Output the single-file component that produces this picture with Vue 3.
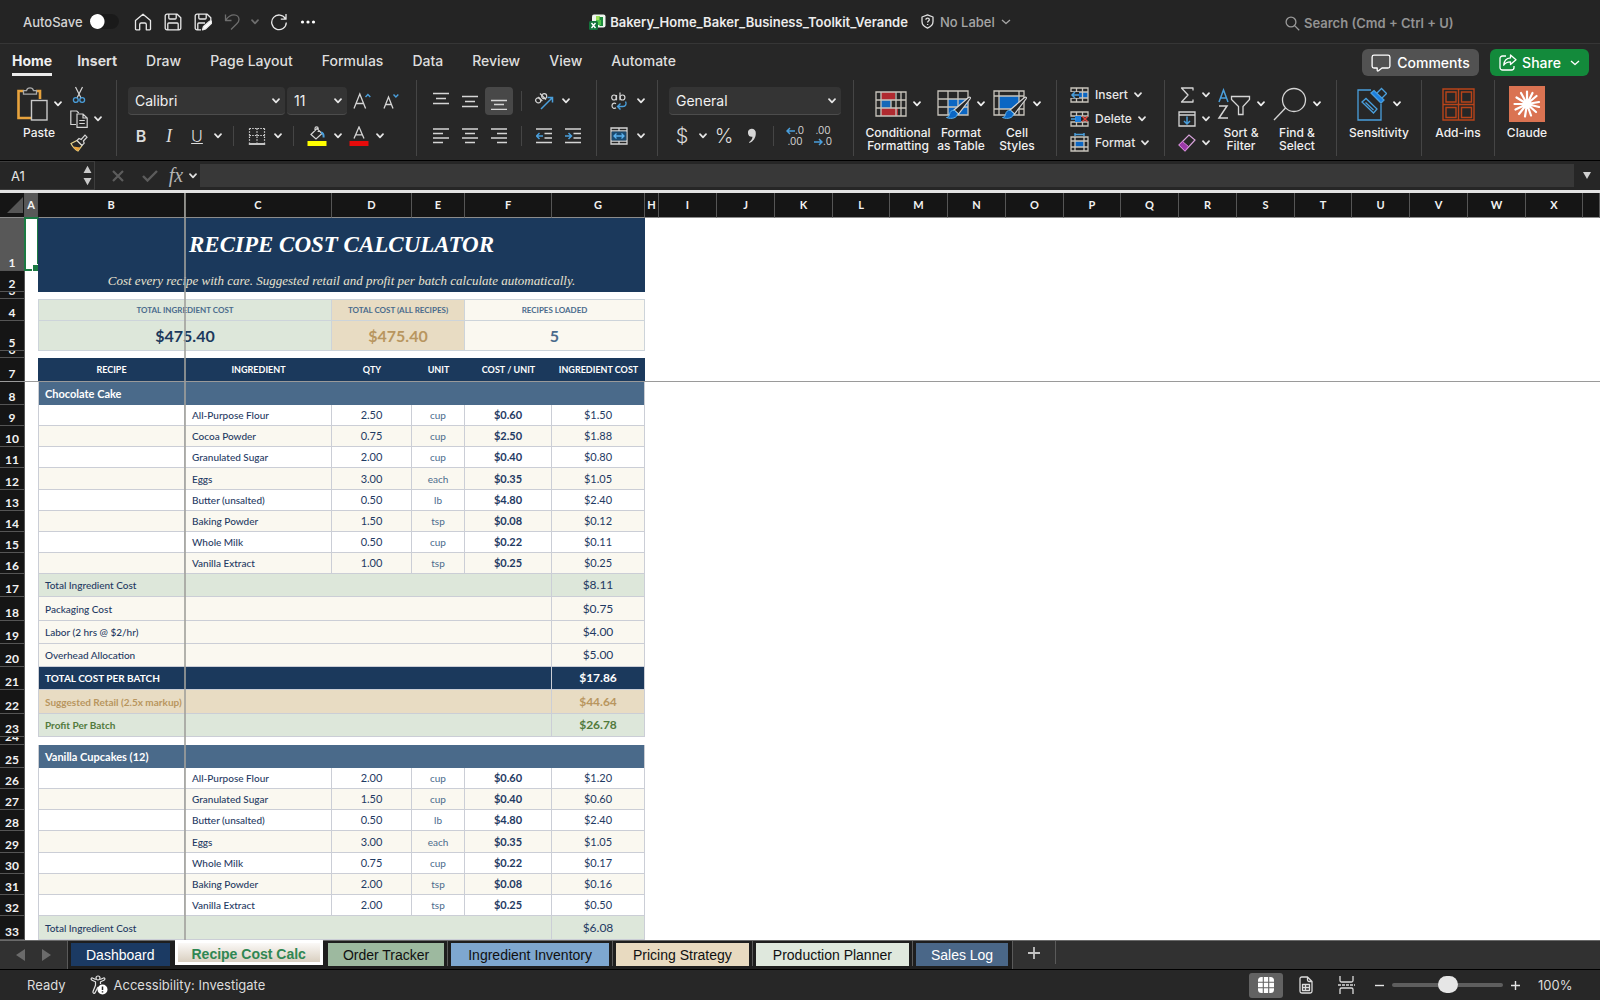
<script setup>
import { h, ref } from 'vue'

const Chevron = () =>
  h('svg', { class: 'chev', width: 8, height: 6, viewBox: '0 0 8 6', 'aria-hidden': 'true' }, [
    h('path', { d: 'M1 1.2 4 4.4 7 1.2', fill: 'none', stroke: 'currentColor', 'stroke-width': 1.7, 'stroke-linecap': 'round', 'stroke-linejoin': 'round' }),
  ])

const menus = ['Home', 'Insert', 'Draw', 'Page Layout', 'Formulas', 'Data', 'Review', 'View', 'Automate']
const fontName = ref('Calibri')
const fontSize = ref('11')
const numberFormat = ref('General')
const zoom = ref(50)

const columns = [
  { id: 'A', w: 13 }, { id: 'B', w: 147 }, { id: 'C', w: 147 }, { id: 'D', w: 80 },
  { id: 'E', w: 53 }, { id: 'F', w: 87 }, { id: 'G', w: 93 }, { id: 'H', w: 14 },
  ...'IJKLMNOPQRSTUVWX'.split('').map((id, i) => ({ id, w: i % 4 === 3 ? 57 : 58 })),
]

const item = (n, name, qty, unit, price, cost, hgt = 21) => ({ n, h: hgt, kind: 'item', name, qty, unit, price, cost })
const sum = (n, hgt, tone, label, value) => ({ n, h: hgt, kind: 'sum', tone, label, value })

const rows = [
  { n: 1, h: 53, kind: 'title', text: 'RECIPE COST CALCULATOR' },
  { n: 2, h: 21, kind: 'subtitle', text: 'Cost every recipe with care. Suggested retail and profit per batch calculate automatically.' },
  { n: 3, h: 7, kind: 'gap' },
  { n: 4, h: 22, kind: 'kpi-label', cells: ['TOTAL INGREDIENT COST', 'TOTAL COST (ALL RECIPES)', 'RECIPES LOADED'] },
  { n: 5, h: 30, kind: 'kpi-value', cells: ['$475.40', '$475.40', '5'] },
  { n: 6, h: 7, kind: 'gap' },
  { n: 7, h: 24, kind: 'head', cells: ['RECIPE', 'INGREDIENT', 'QTY', 'UNIT', 'COST / UNIT', 'INGREDIENT COST'] },
  { n: 8, h: 23, kind: 'recipe', text: 'Chocolate Cake' },
  item(9, 'All-Purpose Flour', '2.50', 'cup', '$0.60', '$1.50'),
  item(10, 'Cocoa Powder', '0.75', 'cup', '$2.50', '$1.88'),
  item(11, 'Granulated Sugar', '2.00', 'cup', '$0.40', '$0.80'),
  item(12, 'Eggs', '3.00', 'each', '$0.35', '$1.05', 22),
  item(13, 'Butter (unsalted)', '0.50', 'lb', '$4.80', '$2.40'),
  item(14, 'Baking Powder', '1.50', 'tsp', '$0.08', '$0.12'),
  item(15, 'Whole Milk', '0.50', 'cup', '$0.22', '$0.11'),
  item(16, 'Vanilla Extract', '1.00', 'tsp', '$0.25', '$0.25'),
  sum(17, 23, 'sage', 'Total Ingredient Cost', '$8.11'),
  sum(18, 24, 'cream', 'Packaging Cost', '$0.75'),
  sum(19, 23, 'cream', 'Labor (2 hrs @ $2/hr)', '$4.00'),
  sum(20, 23, 'cream', 'Overhead Allocation', '$5.00'),
  sum(21, 23, 'navy', 'TOTAL COST PER BATCH', '$17.86'),
  sum(22, 24, 'tan', 'Suggested Retail (2.5x markup)', '$44.64'),
  sum(23, 23, 'profit', 'Profit Per Batch', '$26.78'),
  { n: 24, h: 8, kind: 'gap' },
  { n: 25, h: 23, kind: 'recipe', text: 'Vanilla Cupcakes (12)' },
  item(26, 'All-Purpose Flour', '2.00', 'cup', '$0.60', '$1.20'),
  item(27, 'Granulated Sugar', '1.50', 'cup', '$0.40', '$0.60'),
  item(28, 'Butter (unsalted)', '0.50', 'lb', '$4.80', '$2.40'),
  item(29, 'Eggs', '3.00', 'each', '$0.35', '$1.05', 22),
  item(30, 'Whole Milk', '0.75', 'cup', '$0.22', '$0.17'),
  item(31, 'Baking Powder', '2.00', 'tsp', '$0.08', '$0.16'),
  item(32, 'Vanilla Extract', '2.00', 'tsp', '$0.25', '$0.50'),
  sum(33, 24, 'sage', 'Total Ingredient Cost', '$6.08'),
]

const striped = (row) => (row.n < 17 ? row.n % 2 === 0 : row.n % 2 === 1)

const sheets = [
  { name: 'Dashboard', tone: 's-navy' },
  { name: 'Recipe Cost Calc', tone: 's-active' },
  { name: 'Order Tracker', tone: 's-green' },
  { name: 'Ingredient Inventory', tone: 's-blue' },
  { name: 'Pricing Strategy', tone: 's-tan' },
  { name: 'Production Planner', tone: 's-mint' },
  { name: 'Sales Log', tone: 's-steel' },
]
</script>

<template>
  <div class="app">
    <header class="titlebar">
      <div class="quick">
        <label class="autosave">AutoSave<input type="checkbox" role="switch" /></label>
        <button aria-label="Home">
          <svg width="18" height="18" viewBox="0 0 18 18" class="line"><path d="M1.5 7.6 9 1.2l7.500 6.400V16a.8.8 0 0 1-.8.8h-3.400V11.500a1.500 1.500 0 0 0-1.500-1.500H7.200a1.500 1.500 0 0 0-1.500 1.500v5.300H2.300a.8.8 0 0 1-.8-.8z" /></svg>
        </button>
        <button aria-label="Save">
          <svg width="18" height="18" viewBox="0 0 18 18" class="line"><path d="M1.200 3A1.800 1.800 0 0 1 3 1.200h10.200l3.600 3.600V15a1.800 1.800 0 0 1-1.800 1.800H3A1.800 1.800 0 0 1 1.200 15zM4.800 1.400V5a1 1 0 0 0 1 1h5.400a1 1 0 0 0 1-1V1.400M3.800 16.600V11a1 1 0 0 1 1-1h8.400a1 1 0 0 1 1 1v5.600" /></svg>
        </button>
        <button aria-label="Save as">
          <svg width="18" height="18" viewBox="0 0 18 18" class="line"><path d="M7 16.800H3A1.800 1.800 0 0 1 1.200 15V3A1.800 1.800 0 0 1 3 1.200h10.200l3.600 3.600V8M4.800 1.400V5a1 1 0 0 0 1 1h5.400a1 1 0 0 0 1-1V1.400M3.800 16.600V11a1 1 0 0 1 1-1H11" /><path d="m8.500 16.800 1-3.300 6-5.200a1.400 1.400 0 0 1 2 2l-5.800 5.600z" fill="#fff" /></svg>
        </button>
        <button aria-label="Undo" class="dim">
          <svg width="16" height="18" viewBox="0 0 16 18" class="line"><path d="M1.500 1.500v6h6M1.800 7.200C4 3.600 7 1.800 10 1.800c3 0 5 2 5 4.600 0 1.800-.8 3-2.200 4.400L7 16.500" /></svg>
        </button>
        <button aria-label="Undo options" class="dim tight"><Chevron /></button>
        <button aria-label="Redo">
          <svg width="18" height="18" viewBox="0 0 18 18" class="line"><path d="M15.500 6A7.300 7.300 0 1 0 16.300 9.500M16 1v5.200h-5.200" /></svg>
        </button>
        <button aria-label="More">
          <svg width="16" height="4" viewBox="0 0 16 4" fill="#fff"><circle cx="2.500" cy="2" r="1.600" /><circle cx="8" cy="2" r="1.600" /><circle cx="13.500" cy="2" r="1.600" /></svg>
        </button>
      </div>
      <div class="doc">
        <svg width="17" height="16" viewBox="0 0 17 16"><rect x="3" y=".5" width="13.500" height="13" rx="2" fill="#eef6ee" /><rect x="7" y="2" width="4" height="4" fill="#9be05a" /><rect x="10.500" y="3" width="3.500" height="9" fill="#1d8a3d" /><rect x="7" y="6" width="5" height="5" fill="#4dc247" /><rect x="0" y="7" width="9" height="9" rx="1.500" fill="#13733b" /><path d="m2.500 9 4 5M6.500 9l-4 5" stroke="#fff" stroke-width="1.400" /></svg>
        <h1>Bakery_Home_Baker_Business_Toolkit_Verande</h1>
        <button class="label-btn">
          <svg width="13" height="15" viewBox="0 0 13 15" class="line"><path d="M6.500.900 12 3v4.600c0 3.200-2.200 5.300-5.500 6.500C3.200 12.900 1 10.800 1 7.600V3zM4.900 5.700c0-2.200 3.400-2.200 3.400 0 0 1.300-1.700 1.300-1.700 2.800M6.600 10v1" /></svg>
          <span>No Label</span>
          <svg width="10" height="6" viewBox="0 0 10 6" class="line"><path d="m1 1 4 3.600L9 1" stroke="#a6a6a6" /></svg>
        </button>
      </div>
      <div class="search">
        <svg width="15" height="15" viewBox="0 0 15 15" fill="none" stroke="#9b9b9b" stroke-width="1.300"><circle cx="6" cy="6" r="4.900" /><path d="m9.600 9.600 4.600 4.600" /></svg>
        <input type="text" placeholder="Search (Cmd + Ctrl + U)" aria-label="Search" />
      </div>
    </header>

    <div class="menubar">
      <nav class="menus">
        <a v-for="(m, i) in menus" :key="m" href="#" :class="{ on: i === 0, strong: i < 2 }">{{ m }}</a>
      </nav>
      <button class="comments">
        <svg width="20" height="18" viewBox="0 0 20 18" class="line"><path d="M3 1.200h14A1.900 1.900 0 0 1 18.900 3v9.200A1.900 1.900 0 0 1 17 14h-6l-3.500 2.800c-.8.500-1.300.2-1.300-.6V14H3a1.900 1.900 0 0 1-1.900-1.800V3A1.900 1.900 0 0 1 3 1.200z" /></svg>
        Comments
      </button>
      <button class="share">
        <svg width="18" height="17" viewBox="0 0 18 17" class="line"><path d="M7 2H3.500A2.500 2.500 0 0 0 1 4.500v9A2.500 2.500 0 0 0 3.500 16h9a2.500 2.500 0 0 0 2.500-2.500V12M11.500 1l5.500 4.800-5.500 4.800V7.800c-3.200 0-5.300 1-6.800 3.400.3-4.200 2.800-7 6.800-7.300z" /></svg>
        Share
        <svg width="10" height="6" viewBox="0 0 10 6" class="line"><path d="m1 1 4 3.600L9 1" /></svg>
      </button>
    </div>

    <div class="ribbon">
      <section class="group g-clip">
        <button class="big">
          <span class="pic">
            <svg width="32" height="36" viewBox="0 0 32 36" fill="none"><path d="M8 5H2.500v27H15M20 5h4v8" stroke="#e8a33d" stroke-width="2.600" /><path d="M7.500 8.200V4.700h3a3.600 3.600 0 0 1 7 0h3v3.500z" stroke="#a9a9a9" stroke-width="1.300" fill="#272727" /><rect x="15.500" y="14.500" width="15.500" height="19.500" stroke="#c9c9c9" stroke-width="1.400" fill="#272727" /></svg>
            <Chevron />
          </span>
          Paste
        </button>
        <div class="stack">
          <button aria-label="Cut"><svg width="18" height="18" viewBox="0 0 18 18" fill="none"><path d="M5.500 1 11 12M12.500 1 7 12" stroke="#d5d5d5" stroke-width="1.200" /><circle cx="5.800" cy="14" r="2.400" stroke="#4a9fdc" stroke-width="1.300" /><circle cx="12.200" cy="14" r="2.400" stroke="#4a9fdc" stroke-width="1.300" /></svg></button>
          <button aria-label="Copy"><svg width="18" height="18" viewBox="0 0 18 18" fill="none" stroke="#d5d5d5" stroke-width="1.200"><path d="M6 14.500H.8V1h6l2 2" /><path d="M7 4h6l4.200 4v9.300H7zM13 4v4h4M9.300 10.500h5.500M9.300 13.500h5.500" /></svg><Chevron /></button>
          <button aria-label="Format painter"><svg width="18" height="18" viewBox="0 0 18 18" fill="none"><path d="M1 9.500 7 6.500l5 5-4 5.500c-2-1-5-3.500-7-7.500z" stroke="#e8d38a" stroke-width="1.200" /><path d="m3 12.500 7.500 1L8 17c-2-.8-3.800-2.500-5-4.500z" fill="#e8a33d" /><path d="m7 6.500 2-2 2.200 1L15 1.200l2 2L13.400 7l.8 2.200-2.200 2.300z" stroke="#d5d5d5" stroke-width="1.200" fill="#272727" /></svg></button>
        </div>
      </section>

      <section class="group g-font">
        <div class="line-row spaced">
          <span class="pick font-pick"><select v-model="fontName" aria-label="Font"><option>Calibri</option></select><Chevron /></span>
          <span class="pick size-pick"><select v-model="fontSize" aria-label="Font size"><option>11</option></select><Chevron /></span>
          <button class="ib" aria-label="Increase font size"><svg width="18" height="18" viewBox="0 0 18 18" fill="none"><path d="M1 16.500 6.800 2 12.600 16.500M3 11.500h7.600" stroke="#d5d5d5" stroke-width="1.300" /><path d="m12.500 5 2.400-2.500L17.300 5" stroke="#4a9fdc" stroke-width="1.400" /></svg></button>
          <button class="ib" aria-label="Decrease font size"><svg width="18" height="18" viewBox="0 0 18 18" fill="none"><path d="M2 16.500 6.500 5 11 16.500M3.600 12.500h5.800" stroke="#d5d5d5" stroke-width="1.300" /><path d="m11.500 2.500 2.400 2.500 2.400-2.500" stroke="#4a9fdc" stroke-width="1.400" /></svg></button>
        </div>
        <div class="line-row flush">
          <button class="ib glyph"><b>B</b></button>
          <button class="ib glyph serif"><i>I</i></button>
          <button class="ib glyph thin"><u>U</u></button>
          <button class="cb" aria-label="Underline options"><Chevron /></button>
          <span class="sep"></span>
          <button class="ib" aria-label="Borders"><svg width="18" height="18" viewBox="0 0 18 18" stroke="#d5d5d5" fill="none"><path d="M1.500 1.500h15M1.500 1.500v14M16.500 1.500v14M9 1.500v14M1.500 8.500h15" stroke-dasharray="1.500 1.200" stroke-width="1.200" /><path d="M.8 17h16.400" stroke-width="1.800" /></svg></button>
          <button class="cb" aria-label="Border options"><Chevron /></button>
          <span class="sep"></span>
          <button class="ib" aria-label="Fill color"><svg width="20" height="20" viewBox="0 0 20 20" fill="none"><path d="m4 8.500 6-6 5 5-6 5.500z M8 5V2.500a1.600 1.600 0 0 1 3.200 0V6" stroke="#d5d5d5" stroke-width="1.200" /><path d="M14 6.500c2 .3 2.800 2 2.600 5" stroke="#4a9fdc" stroke-width="2" /><path d="M.5 15h19v5H.5z" fill="#ff0" /></svg></button>
          <button class="cb" aria-label="Fill color options"><Chevron /></button>
          <button class="ib" aria-label="Font color"><svg width="20" height="20" viewBox="0 0 20 20" fill="none"><path d="m5 12.500 5-11.500 5 11.500M6.800 8.800h6.400" stroke="#d5d5d5" stroke-width="1.300" /><path d="M.5 15h19v5H.5z" fill="#e60b0b" /></svg></button>
          <button class="cb" aria-label="Font color options"><Chevron /></button>
        </div>
      </section>

      <section class="group g-align">
        <div class="line-row">
          <button class="ib" aria-label="Top align"><svg width="16" height="18" viewBox="0 0 16 18" class="bars"><path d="M0 1.500h16M3 6.500h10M0 11.500h16" /></svg></button>
          <button class="ib" aria-label="Middle align"><svg width="16" height="18" viewBox="0 0 16 18" class="bars"><path d="M0 4.500h16M3 9.500h10M0 14.500h16" /></svg></button>
          <button class="ib on" aria-label="Bottom align"><svg width="16" height="18" viewBox="0 0 16 18" class="bars"><path d="M0 8.500h16M3 12.500h10M0 17.500h16" /></svg></button>
          <span class="sep"></span>
          <button class="ib" aria-label="Orientation"><svg width="20" height="18" viewBox="0 0 20 18" fill="none"><g stroke="#d5d5d5" stroke-width="1.200"><ellipse cx="4.200" cy="8.500" rx="2.300" ry="2.600" transform="rotate(-45 4.200 8.500)" /><path d="m4.300 5 4 4" /><path d="m6 1.500 6 6" /><circle cx="10.200" cy="4.200" r="2.500" /></g><path d="M7 17 18 6M13.500 5.500h5v5" stroke="#4a9fdc" stroke-width="1.500" /></svg></button>
          <button class="cb" aria-label="Orientation options"><Chevron /></button>
        </div>
        <div class="line-row">
          <button class="ib" aria-label="Align left"><svg width="16" height="16" viewBox="0 0 16 16" class="bars"><path d="M0 1h16M0 5.500h10M0 10h16M0 14.500h10" /></svg></button>
          <button class="ib" aria-label="Center"><svg width="16" height="16" viewBox="0 0 16 16" class="bars"><path d="M0 1h16M3 5.500h10M0 10h16M3 14.500h10" /></svg></button>
          <button class="ib" aria-label="Align right"><svg width="16" height="16" viewBox="0 0 16 16" class="bars"><path d="M0 1h16M6 5.500h10M0 10h16M6 14.500h10" /></svg></button>
          <span class="sep"></span>
          <button class="ib" aria-label="Decrease indent"><svg width="16" height="16" viewBox="0 0 16 16" class="bars"><path d="M0 1h16M8.500 5.500H16M8.500 10H16M0 14.500h16" /><path d="M7 8H.5M3.500 5l-3 3 3 3" class="blue" /></svg></button>
          <button class="ib" aria-label="Increase indent"><svg width="16" height="16" viewBox="0 0 16 16" class="bars"><path d="M0 1h16M8.500 5.500H16M8.500 10H16M0 14.500h16" /><path d="M0 8h6M3.500 5l3 3-3 3" class="blue" /></svg></button>
        </div>
      </section>

      <section class="group g-wrap">
        <div class="line-row">
          <button class="ib" aria-label="Wrap text"><svg width="18" height="18" viewBox="0 0 18 18" fill="none"><g stroke="#d5d5d5" stroke-width="1.200"><ellipse cx="4" cy="5.500" rx="2.300" ry="2.500" /><path d="M6.500 3v5.300" /><path d="M10 .5v7.800" /><ellipse cx="12.500" cy="5.500" rx="2.400" ry="2.500" /><path d="M6 11.800c-1.500-1.200-4-.5-4 2s2.500 3.200 4 2" /></g><path d="M15.500 9.500c1.500 2.500 0 5-2.500 5H8M10.500 11.500l-3 3 3 3" stroke="#4a9fdc" stroke-width="1.400" /></svg></button>
          <button class="cb" aria-label="Wrap options"><Chevron /></button>
        </div>
        <div class="line-row">
          <button class="ib" aria-label="Merge cells"><svg width="18" height="18" viewBox="0 0 18 18" fill="none"><path d="M1 1h16v16H1zM1 4h16M1 14h16M9 1v3M9 14v3" stroke="#d5d5d5" stroke-width="1.300" /><path d="M1.700 4.500h14.600v9H1.700z" fill="#1a4a70" /><path d="M4 9h10M6.500 6.500 4 9l2.500 2.500M11.500 6.500 14 9l-2.500 2.500" stroke="#5cb2ee" stroke-width="1.300" /></svg></button>
          <button class="cb" aria-label="Merge options"><Chevron /></button>
        </div>
      </section>

      <section class="group g-num">
        <div class="line-row">
          <span class="pick num-pick"><select v-model="numberFormat" aria-label="Number format"><option>General</option></select><Chevron /></span>
        </div>
        <div class="line-row flush">
          <button class="ib glyph money">$</button>
          <button class="cb" aria-label="Currency options"><Chevron /></button>
          <button class="ib glyph money">%</button>
          <button class="ib" aria-label="Comma style"><svg width="10" height="16" viewBox="0 0 10 16"><path d="M4.500.800a4 4 0 0 1 4.300 4.400c0 4.500-2.300 8-6.300 9.800l-.5-.8c2.200-1.400 3.300-3 3.500-5.400A4 4 0 1 1 4.500.800z" fill="#d5d5d5" /></svg></button>
          <span class="sep"></span>
          <button class="ib deci"><span><svg width="9" height="8" viewBox="0 0 9 8" class="blue"><path d="M9 4H1M4 1 1 4l3 3" /></svg>.0</span><span>.00</span></button>
          <button class="ib deci"><span>.00</span><span><svg width="9" height="8" viewBox="0 0 9 8" class="blue"><path d="M0 4h8M5 1l3 3-3 3" /></svg>.0</span></button>
        </div>
      </section>

      <section class="group g-style">
        <button class="big wide">
          <span class="pic">
            <svg width="32" height="26" viewBox="0 0 32 26"><path d="M6 1h14v8H6zM6 17h17v8H6z" fill="#b02a30" /><path d="M6 9h10v8H6z" fill="#1668b8" /><path d="M1 1h30v24H1zM1 9h30M1 17h30M6 1v24M26 1v24M21 1v24M16 9v8" class="grid" /></svg>
            <Chevron />
          </span>
          Conditional<br />Formatting
        </button>
        <button class="big">
          <span class="pic">
            <svg width="34" height="32" viewBox="0 0 34 32"><path d="M11 11h20v16H11z" fill="#0b66c3" /><path d="M1 3h30v24H1zM1 11h30M1 19h30M11 3v24M21 3v24" class="grid" /><path d="M17 22 31.500 9.500c1.500-1 2.500 0 1.500 1.500L21.500 26z" fill="#272727" stroke="#d5d5d5" stroke-width="1.200" /><path d="M17.500 22.500c-3-.5-4.500 1-5 4-.3 1.500-1 2.500-3 3 5 2 11 .5 11-4z" fill="#0b66c3" stroke="#5cb2ee" /></svg>
            <Chevron />
          </span>
          Format<br />as Table
        </button>
        <button class="big">
          <span class="pic">
            <svg width="34" height="32" viewBox="0 0 34 32"><path d="M6 8h20v13H6z" fill="#0b66c3" /><path d="M1 3h30v24H1zM1 8h30M1 21h30M6 3v24M26 3v24" class="grid" /><path d="M17 22 31.500 9.500c1.500-1 2.500 0 1.500 1.500L21.500 26z" fill="#272727" stroke="#d5d5d5" stroke-width="1.200" /><path d="M17.500 22.500c-3-.5-4.500 1-5 4-.3 1.500-1 2.500-3 3 5 2 11 .5 11-4z" fill="#0b66c3" stroke="#5cb2ee" /></svg>
            <Chevron />
          </span>
          Cell<br />Styles
        </button>
      </section>

      <section class="group g-cells">
        <div class="stack">
          <button><svg width="19" height="16" viewBox="0 0 19 16"><path d="M5 5h13v6H5z" fill="#0b66c3" /><path d="M1 1h17v14H1zM1 5h17M1 11h17M6.500 1v14M12.500 1v14" class="grid" /><path d="M0 5h9v6H0z" fill="#272727" /><path d="M9 8H2M5 5 2 8l3 3" class="blue" /></svg>Insert<Chevron /></button>
          <button><svg width="19" height="16" viewBox="0 0 19 16"><path d="M1 1h17v4H1zM1 11h17v4H1zM6.500 1v4M12.500 1v4M6.500 11v4M12.500 11v4" class="grid" /><path d="M5 5h6v6H5z" fill="#1b7fe0" /><path d="M1 8h5" class="blue" /><path d="m12.500 5.500 5 5M17.500 5.500l-5 5" stroke="#e0443c" stroke-width="1.500" /></svg>Delete<Chevron /></button>
          <button><svg width="19" height="19" viewBox="0 0 19 19"><path d="M5 8h9v6H5z" fill="#0b66c3" /><path d="M1 4h17v14H1zM1 8h17M1 14h17M5 4v14M14 4v14" class="grid" /><path d="M5 1.500h9M5 0v3M14 0v3" class="blue" /></svg>Format<Chevron /></button>
        </div>
      </section>

      <section class="group g-edit">
        <div class="stack">
          <button aria-label="AutoSum"><svg width="18" height="16" viewBox="0 0 18 16" class="line"><path d="M15 3.500V1H3.500l6.500 7-6.500 7H15v-2.500" stroke="#d5d5d5" /></svg><Chevron /></button>
          <button aria-label="Fill"><svg width="18" height="16" viewBox="0 0 18 16" fill="none"><path d="M1 1h16v14H1zM1 4h16" stroke="#d5d5d5" stroke-width="1.300" /><path d="M9 5.500v7M6 10l3 3 3-3" class="blue" /></svg><Chevron /></button>
          <button aria-label="Clear"><svg width="18" height="18" viewBox="0 0 18 18" fill="none"><path d="m1 11 10-10 6 5L7 17z" stroke="#d9a3dc" stroke-width="1.200" /><path d="m1 11 3.500-3.500 6 5L7 17z" fill="#9b3aa8" stroke="#d07fd6" /></svg><Chevron /></button>
        </div>
        <button class="big">
          <span class="pic">
            <svg width="34" height="32" viewBox="0 0 34 32" fill="none" stroke-width="1.300"><path d="M2 14 6.500 2 11 14M3.500 10h6" stroke="#4a9fdc" stroke-width="1.500" /><path d="M2 18h8L2 30h9" stroke="#d5d5d5" stroke-width="1.500" /><path d="M14.500 8.500h18v3L26 18.500v8h-4.500v-8l-7-7z" stroke="#d5d5d5" /></svg>
            <Chevron />
          </span>
          Sort &amp;<br />Filter
        </button>
        <button class="big">
          <span class="pic">
            <svg width="34" height="34" viewBox="0 0 34 34" fill="none" stroke="#d5d5d5" stroke-width="1.300"><circle cx="21" cy="13" r="11.500" /><path d="M12.500 21 1 33" /></svg>
            <Chevron />
          </span>
          Find &amp;<br />Select
        </button>
      </section>

      <section class="group g-sens">
        <button class="big wide">
          <span class="pic">
            <svg width="30" height="34" viewBox="0 0 30 34" fill="none" stroke="#4a9fdc" stroke-width="1.300"><path d="M14 3H1v30h23V17" /><path d="m5 15 4-3.500L20 22l-3.500 4zM8.500 15.500l8 7.500" /><path d="m14 6 3-2.500L27 13l-3 3z" fill="#1b7fe0" /><path d="m20 6 4.500-4.500 5 5L25 11" /></svg>
            <Chevron />
          </span>
          Sensitivity
        </button>
      </section>
      <section class="group g-add">
        <button class="big wide">
          <span class="pic"><svg width="33" height="33" viewBox="0 0 33 33" fill="none" stroke="#b8441a" stroke-width="1.400"><path d="M1 1h31v31H1zM16.500 1v31M1 16.500h31" /><path d="M4 4h10v10H4zM19.500 4h10v10h-10zM4 19.500h10v10H4zM19.500 19.500h10v10h-10z" /></svg></span>
          Add-ins
        </button>
      </section>
      <section class="group g-claude">
        <button class="big">
          <span class="pic"><svg width="36" height="36" viewBox="0 0 36 36"><rect width="36" height="36" fill="#da7352" /><path d="M18 18V5.500M18 18l5.500-11M18 18l9.500-8M18 18l12-2M18 18l12 3M18 18l9 8M18 18l4 11.500M18 18l-2 12.500M18 18l-8 10M18 18 6.500 23.500M18 18H5.500M18 18 7.500 11.500M18 18 12 7" stroke="#fff" stroke-width="2.200" stroke-linecap="round" /><circle cx="18" cy="18" r="4" fill="#fff" /></svg></span>
          Claude
        </button>
      </section>
    </div>

    <div class="formula">
      <div class="namebox">
        <input type="text" value="A1" aria-label="Name box" />
        <svg width="9" height="21" viewBox="0 0 9 21" fill="#c9c9c9"><path d="M.5 8 4.500.8 8.500 8zM.5 13l4 7.200 4-7.200z" /></svg>
      </div>
      <button aria-label="Cancel" class="fb"><svg width="12" height="12" viewBox="0 0 12 12" stroke="#5c5c5c" stroke-width="2.200"><path d="m1 1 10 10M11 1 1 11" /></svg></button>
      <button aria-label="Enter" class="fb"><svg width="16" height="12" viewBox="0 0 16 12" fill="none" stroke="#5c5c5c" stroke-width="2.400"><path d="m1 6 4.500 4.500L15 1" /></svg></button>
      <button class="fx"><i>fx</i><Chevron /></button>
      <input type="text" class="entry" aria-label="Formula" />
      <button aria-label="Expand formula bar" class="expand"><svg width="8" height="7" viewBox="0 0 8 7" fill="#d0d0d0"><path d="M0 0h8L4 7z" /></svg></button>
    </div>

    <main class="sheet">
      <table>
        <colgroup>
          <col class="c-head" />
          <col v-for="c in columns" :key="c.id" :style="{ width: c.w + 'px' }" />
          <col />
        </colgroup>
        <thead>
          <tr>
            <th class="corner" aria-label="Select all"><svg width="16" height="16" viewBox="0 0 16 16"><path d="M16 0v16H0z" fill="#555" /></svg></th>
            <th v-for="c in columns" :key="c.id" scope="col" :class="{ sel: c.id === 'A' }">{{ c.id }}</th>
            <th></th>
          </tr>
        </thead>
        <tbody>
          <tr v-for="row in rows" :key="row.n" :class="row.kind">
            <th scope="row" :class="{ sel: row.n === 1 }"><span :style="{ height: row.h - 1 + 'px' }">{{ row.n }}</span></th>
            <td><span v-if="row.n === 1" class="cursor"></span></td>
            <template v-if="row.kind === 'title' || row.kind === 'subtitle'">
              <td colspan="6" class="banner">{{ row.text }}</td>
            </template>
            <template v-else-if="row.kind === 'gap'"><td colspan="6"></td></template>
            <template v-else-if="row.cells && row.cells.length === 3">
              <td v-for="(c, i) in row.cells" :key="i" colspan="2" :class="'kpi k' + i">{{ c }}</td>
            </template>
            <template v-else-if="row.kind === 'head'">
              <td v-for="c in row.cells" :key="c" class="hcell">{{ c }}</td>
            </template>
            <template v-else-if="row.kind === 'recipe'"><td colspan="6" class="rcell">{{ row.text }}</td></template>
            <template v-else-if="row.kind === 'item'">
              <td class="cell first" :class="{ alt: striped(row) }"></td>
              <td class="cell name" :class="{ alt: striped(row) }">{{ row.name }}</td>
              <td class="cell qty" :class="{ alt: striped(row) }">{{ row.qty }}</td>
              <td class="cell unit" :class="{ alt: striped(row) }">{{ row.unit }}</td>
              <td class="cell price" :class="{ alt: striped(row) }">{{ row.price }}</td>
              <td class="cell" :class="{ alt: striped(row) }">{{ row.cost }}</td>
            </template>
            <template v-else>
              <td colspan="5" class="cell first slabel" :class="row.tone">{{ row.label }}</td>
              <td class="cell svalue" :class="row.tone">{{ row.value }}</td>
            </template>
            <td colspan="18"></td>
          </tr>
        </tbody>
      </table>
      <div class="freeze-v"></div>
      <div class="freeze-h"></div>
    </main>

    <div class="tabs">
      <div class="nav">
        <button aria-label="Previous sheet"><svg width="9" height="12" viewBox="0 0 9 12" fill="#6b6b6b"><path d="M9 0v12L0 6z" /></svg></button>
        <button aria-label="Next sheet"><svg width="9" height="12" viewBox="0 0 9 12" fill="#6b6b6b"><path d="M0 0v12l9-6z" /></svg></button>
      </div>
      <div class="strip">
        <button v-for="s in sheets" :key="s.name" class="tab" :class="s.tone">{{ s.name }}</button>
      </div>
      <button class="plus" aria-label="Add sheet"><svg width="12" height="12" viewBox="0 0 12 12" stroke="#c4c4c4" stroke-width="1.800"><path d="M6 0v12M0 6h12" /></svg></button>
    </div>

    <footer class="status">
      <span>Ready</span>
      <button class="access">
        <svg width="18" height="20" viewBox="0 0 18 20" fill="none" stroke="#e4e4e4" stroke-width="1.200"><circle cx="8" cy="3" r="2" /><path d="M5.800 4.500 2.500 3C1 2.500.500 4.500 2 5.200l3.500 1.600v3.500L3 16.500c-.5 1.800 1.500 2.500 2.200 1L8 12M10.200 4.500 13.500 3c1.500-.5 2 1.500.5 2.200l-3.500 1.600V9" /><circle cx="12.500" cy="14.500" r="5" fill="#fff" stroke="none" /><path d="M12.500 11.500v3.500M12.500 16.200v1.300" stroke="#222" stroke-width="1.500" /></svg>
        Accessibility: Investigate
      </button>
      <div class="views">
        <button aria-label="Normal view" class="view on"><svg width="16" height="16" viewBox="0 0 16 16"><rect width="16" height="16" rx="3.500" fill="#fff" /><path d="M5.300 0v16M10.700 0v16M0 5.300h16M0 10.700h16" stroke="#646464" stroke-width="1.100" /></svg></button>
        <button aria-label="Page layout view" class="view"><svg width="14" height="18" viewBox="0 0 14 18" class="line"><path d="M8.500 1H2.800A1.800 1.800 0 0 0 1 2.800v12.400A1.800 1.800 0 0 0 2.800 17h8.400a1.800 1.800 0 0 0 1.800-1.800V5.500zV4a1.500 1.500 0 0 0 1.500 1.500H13M3.500 8.500h7v6h-7zM3.500 11.500h7M6.500 8.500v6" /></svg></button>
        <button aria-label="Page break view" class="view"><svg width="17" height="18" viewBox="0 0 17 18" class="line"><path d="M2 0v4.500A1.500 1.500 0 0 0 3.500 6h10A1.500 1.500 0 0 0 15 4.500V0M2 18v-4.500A1.500 1.500 0 0 1 3.500 12h10a1.500 1.500 0 0 1 1.500 1.500V18" /><path d="M0 9h17" stroke-dasharray="3 1" /></svg></button>
      </div>
      <button class="zb" aria-label="Zoom out"><svg width="9" height="9" viewBox="0 0 9 9" stroke="#e4e4e4" stroke-width="1.400"><path d="M0 4.500h9" /></svg></button>
      <input v-model="zoom" type="range" min="0" max="100" class="slider" aria-label="Zoom" />
      <button class="zb" aria-label="Zoom in"><svg width="9" height="9" viewBox="0 0 9 9" stroke="#e4e4e4" stroke-width="1.400"><path d="M0 4.500h9M4.500 0v9" /></svg></button>
      <span class="pct">100%</span>
    </footer>
  </div>
</template>

<style>
body {
  background: #272727;
}
</style>

<style scoped>
.app {
  display: flex;
  flex-direction: column;
  height: 100vh;
  overflow: hidden;
  color: #e6e6e6;
  background: #272727;
  font-family: Inter, "Liberation Sans", sans-serif;
  font-size: 12px;
}
* {
  box-sizing: border-box;
}
button {
  display: flex;
  align-items: center;
  justify-content: center;
  margin: 0;
  padding: 0;
  border: 0;
  background: none;
  color: inherit;
  font: inherit;
}
input,
select {
  margin: 0;
  border: 0;
  border-radius: 0;
  outline: 0;
  background: none;
  color: inherit;
  font: inherit;
}
svg {
  display: block;
  flex: none;
}
.line {
  fill: none;
  stroke: currentColor;
  stroke-width: 1.3;
  stroke-linejoin: round;
}
.bars {
  fill: none;
  stroke: #d5d5d5;
  stroke-width: 1.3;
}
.grid {
  fill: none;
  stroke: #c8c4bc;
  stroke-width: 1.3;
}
.blue {
  fill: none;
  stroke: #4a9fdc;
  stroke-width: 1.5;
}

.titlebar {
  display: grid;
  grid-template-columns: 1fr auto 1fr;
  align-items: center;
  flex: none;
  height: 44px;
  background: #242424;
  border-bottom: 1px solid #363636;
}
.quick {
  display: flex;
  align-items: center;
  gap: 12px;
  padding-left: 23px;
  color: #e8e8e8;
}
.autosave {
  display: flex;
  align-items: center;
  gap: 7px;
  margin-right: 3px;
  font-size: 13px;
  font-weight: 500;
  color: #d4d4d4;
}
.autosave input {
  appearance: none;
  width: 29px;
  height: 15px;
  border-radius: 8px;
  background: radial-gradient(circle at 7px 50%, #fff 7px, #1a1a1a 8px);
}
.dim {
  color: #6e6e6e;
}
.tight {
  margin: 0 -1px;
}
.doc {
  display: flex;
  align-items: center;
}
.doc h1 {
  margin: 0 13px 0 4px;
  font-size: 13px;
  font-weight: 600;
  color: #ececec;
}
.label-btn {
  gap: 6px;
  font-size: 13px;
  font-weight: 500;
  color: #a6a6a6;
}
.label-btn .line {
  color: #e0e0e0;
}
.search {
  display: flex;
  align-items: center;
  justify-self: end;
  gap: 4px;
  margin-right: 96px;
  padding-top: 3px;
}
.search input {
  width: 200px;
  padding: 0;
  font-size: 13px;
  font-weight: 600;
}
.search input::placeholder {
  color: #939393;
  opacity: 1;
}

.menubar {
  display: flex;
  align-items: flex-start;
  flex: none;
  height: 36px;
  padding: 5px 11px 0 12px;
}
.menus {
  display: flex;
  gap: 29px;
  margin-right: auto;
}
.menus a {
  padding-bottom: 1px;
  border-bottom: 3px solid transparent;
  color: #dedede;
  font-size: 14px;
  font-weight: 500;
  line-height: 23px;
  text-decoration: none;
}
.menus .strong {
  font-weight: 700;
}
.menus .strong + .strong {
  margin-left: -4px;
}
.menus .on {
  border-color: #ececec;
  color: #f0f0f0;
}
.comments,
.share {
  height: 27px;
  border-radius: 6px;
  font-size: 14px;
  font-weight: 500;
  color: #fff;
}
.comments {
  gap: 6px;
  width: 117px;
  margin-right: 11px;
  background: #525252;
}
.share {
  gap: 5px;
  width: 99px;
  background: #138a3b;
}
.share .line + .line {
  margin-left: 4px;
}

.ribbon {
  display: flex;
  flex: none;
  height: 81px;
  padding-bottom: 4px;
  border-bottom: 1px solid #000;
}
.group {
  position: relative;
  flex: none;
  padding-top: 6px;
  border-right: 1px solid #454545;
}
.g-clip { display: flex; width: 117px; padding-left: 11px; }
.g-font { width: 300px; padding-left: 10px; }
.g-align { width: 180px; padding-left: 10px; }
.g-wrap { width: 61px; padding-left: 8px; }
.g-num { width: 196px; padding-left: 10px; }
.g-style { display: flex; width: 203px; padding-left: 9px; }
.g-cells { width: 108px; padding-left: 13px; }
.g-edit { display: flex; width: 172px; padding-left: 13px; }
.g-sens { width: 85px; }
.g-add { width: 73px; }
.g-claude { width: 66px; padding-left: 4px; border: 0; }
.big {
  flex-direction: column;
  justify-content: flex-start;
  width: 56px;
  color: #f0f0f0;
  font-size: 12px;
  font-weight: 500;
  line-height: 13px;
}
.big.wide {
  width: 100%;
}
.g-style .big.wide {
  width: 70px;
}
.pic {
  display: flex;
  align-items: center;
  gap: 6px;
  height: 36px;
  margin-bottom: 4px;
}
.stack {
  display: flex;
  flex-direction: column;
  gap: 7px;
  width: 40px;
}
.stack button {
  gap: 6px;
  height: 17px;
  justify-content: flex-start;
  font-size: 12px;
  font-weight: 500;
}
.g-clip .stack {
  margin-left: 3px;
}
.g-edit .stack {
  width: 35px;
}
.g-cells .stack {
  width: auto;
}
.line-row {
  display: flex;
  align-items: center;
  gap: 1px;
  height: 30px;
}
.line-row + .line-row {
  margin-top: 5px;
}
.line-row.flush {
  gap: 0;
}
.ib {
  width: 28px;
  height: 28px;
  border-radius: 4px;
}
.ib.on {
  background: #484848;
}
.cb {
  width: 14px;
  height: 28px;
}
.sep {
  width: 1px;
  height: 20px;
  margin: 0 7px;
  background: #454545;
}
.g-font .sep {
  margin: 0 9px 0 8px;
}
.glyph {
  font-size: 16px;
  color: #dcdcdc;
}
.glyph b {
  font-weight: 600;
}
.glyph.thin {
  font-weight: 300;
}
.glyph.serif {
  font-family: "Liberation Serif", serif;
  font-size: 18px;
}
.money {
  font-size: 20px;
  font-weight: 300;
}
.deci {
  flex-direction: column;
  font-size: 10px;
  line-height: 11px;
  color: #d0d0d0;
}
.deci span {
  display: flex;
  align-items: center;
}
.pick {
  position: relative;
  display: flex;
  height: 28px;
  margin-left: 1px;
}
.pick select {
  appearance: none;
  width: 100%;
  padding: 0 7px;
  border-radius: 4px;
  border-bottom: 1px solid #4c4c4c;
  background: #343434;
  color: #f0f0f0;
  font-size: 14px;
}
.pick .chev {
  position: absolute;
  right: 5px;
  top: 11px;
}
.font-pick { width: 157px; }
.size-pick { width: 60px; }
.num-pick { width: 172px; }

.formula {
  display: flex;
  align-items: center;
  flex: none;
  height: 29px;
  background: #262626;
}
.namebox {
  display: flex;
  align-items: center;
  width: 95px;
  height: 29px;
  padding-right: 2px;
  border: 1px solid #3d3d3d;
  border-left: 0;
  margin-right: 7px;
}
.namebox input {
  flex: 1;
  min-width: 0;
  padding: 0 0 0 11px;
  font-size: 13px;
}
.fb {
  width: 32px;
}
.fx {
  gap: 6px;
  width: 34px;
  color: #b4b4b4;
  font: 20px "Liberation Serif", serif;
}
.fx .chev {
  color: #e0e0e0;
}
.entry {
  flex: 1;
  min-width: 0;
  height: 23px;
  background: #383838;
}
.expand {
  width: 26px;
  height: 21px;
  background: #262626;
}

.sheet {
  position: relative;
  flex: 1;
  min-height: 0;
  overflow: hidden;
  border-top: 3px solid #e2e2e2;
  background: #fff;
  color: #1f3a63;
  font-family: Lato, "Open Sans", sans-serif;
  font-size: 11px;
}
table {
  width: 100%;
  table-layout: fixed;
  border-collapse: separate;
  border-spacing: 0;
}
.c-head {
  width: 25px;
}
th,
td {
  padding: 0;
  line-height: 14px;
  text-align: center;
  white-space: nowrap;
}
td {
  position: relative;
}
thead th {
  height: 25px;
  border-right: 1px solid #555;
  border-bottom: 1px solid #8c8c8c;
  background: #151515;
  color: #f2f2f2;
  font-size: 11px;
  font-weight: 700;
}
.corner svg {
  margin-left: 7px;
}
tbody th {
  border-right: 1px solid #555;
  border-bottom: 1px solid #555;
  background: #151515;
  color: #f2f2f2;
  font-size: 12px;
  font-weight: 700;
}
tbody th span {
  display: flex;
  align-items: flex-end;
  justify-content: center;
  overflow: hidden;
  line-height: 15px;
}
thead .sel,
tbody .sel {
  background: #585858;
}
.cursor {
  position: absolute;
  inset: -1px -1px 0 -1px;
  border: 2px solid #1b7a43;
}
.cursor::after {
  content: "";
  position: absolute;
  right: -3px;
  bottom: -3px;
  width: 6px;
  height: 6px;
  border: 1px solid #fff;
  background: #1b7a43;
}
.banner {
  background: #1b395c;
  color: #fff;
  font: italic bold 23px/24px "Liberation Serif", serif;
}
.subtitle .banner {
  padding-bottom: 2px;
  color: #e8e2cf;
  font: italic 13px/14px "Liberation Serif", serif;
}
.kpi {
  border-right: 1px solid #cdd4da;
  border-bottom: 1px solid #cdd4da;
  font-weight: 700;
}
.kpi-label .kpi {
  border-top: 1px solid #cdd4da;
  color: #4a6b8c;
  font-size: 8px;
}
.kpi-value .kpi {
  font-size: 16px;
}
.k0 {
  border-left: 1px solid #cdd4da;
  background: #dde7da;
}
.k1 { background: #e8dcc3; }
.k2 { background: #faf8f0; }
.kpi-value .k0 { color: #1b395c; }
.kpi-value .k1 { color: #b8965f; }
.kpi-value .k2 { color: #4a6b8c; }
.hcell {
  background: #1b395c;
  color: #fff;
  font-size: 9px;
  font-weight: 700;
}
.rcell {
  padding-left: 6px;
  border-right: 1px solid #c9ccd2;
  border-left: 1px solid #c9ccd2;
  background: #4a6a8a;
  color: #fff;
  font-size: 11px;
  font-weight: 700;
  text-align: left;
}
.cell {
  border-right: 1px solid #cbced6;
  border-bottom: 1px solid #cbced6;
}
.first {
  border-left: 1px solid #cbced6;
}
.alt,
.cream {
  background: #faf8f0;
}
.name,
.slabel {
  padding-left: 7px;
  font-size: 10px;
  font-weight: 500;
  text-align: left;
}
.slabel {
  padding-left: 6px;
}
.unit {
  color: #4a6b8c;
  font-size: 10px;
}
.price {
  font-weight: 700;
}
.svalue {
  font-size: 12px;
}
.sage {
  background: #dde7da;
}
.navy {
  background: #1b395c;
  color: #fff;
  font-weight: 700;
}
.tan {
  background: #e8dcc3;
  color: #b8965f;
  font-weight: 700;
}
.profit {
  background: #dde7da;
  color: #527a3d;
  font-weight: 700;
}
.freeze-v {
  position: absolute;
  top: 0;
  bottom: 0;
  left: 184px;
  width: 2px;
  background: rgba(160, 160, 155, 0.8);
}
.freeze-h {
  position: absolute;
  top: 188px;
  left: 0;
  right: 0;
  height: 1px;
  background: #9a9a9a;
}

.tabs {
  display: flex;
  flex: none;
  height: 30px;
  border-top: 1px solid #6a6a6a;
  border-bottom: 1px solid #000;
  background: #313131;
}
.nav {
  display: flex;
  align-items: center;
  gap: 17px;
  width: 68px;
  padding-left: 16px;
  border-right: 1px solid #5a5a5a;
}
.strip {
  display: flex;
  align-items: flex-start;
  gap: 7px;
  padding: 0 4px 0 3px;
  border-right: 1px solid #5a5a5a;
  background: #1e1e1e;
}
.tab {
  position: relative;
  height: 23px;
  margin-top: 2px;
  padding: 0 17px;
  color: #101010;
  font-family: "Liberation Sans", sans-serif;
  font-size: 14px;
  line-height: 22px;
}
.s-green ~ .tab::before {
  content: "";
  position: absolute;
  top: -2px;
  bottom: 0;
  left: -4px;
  width: 1px;
  background: #5a5a5a;
}
.s-navy { padding: 0 15px; background: #1b3a63; color: #fff; }
.s-active {
  height: 25px;
  margin: -1px -2px 0;
  padding: 2px 14px 0;
  border: 3px solid #fff;
  background: linear-gradient(#fbf9f7, #d9cfc0);
  color: #2f8753;
  font-weight: 700;
}
.s-green { padding: 0 15px; background: #9db99f; }
.s-blue { background: #7ea7cf; }
.s-tan { background: #e8dac0; }
.s-mint { background: #dfe8dd; }
.s-steel { padding: 0 15px; background: #4a6788; color: #fff; }
.plus {
  width: 43px;
  margin-bottom: 5px;
  border-right: 1px solid #5a5a5a;
}

.status {
  display: flex;
  align-items: center;
  flex: none;
  height: 30px;
  padding: 0 26px 0 27px;
  font-size: 13px;
  color: #dcdcdc;
}
.access {
  gap: 6px;
  margin-left: 24px;
}
.views {
  display: flex;
  gap: 6px;
  margin-left: auto;
}
.view {
  width: 34px;
  height: 25px;
  border-radius: 3px;
}
.view.on {
  background: #626262;
}
.zb {
  width: 9px;
  margin: 0 8px;
}
.views + .zb {
  margin-left: 12px;
}
.slider {
  appearance: none;
  width: 111px;
  height: 20px;
}
.slider::-webkit-slider-runnable-track {
  height: 4px;
  border-radius: 2px;
  background: #5e5e5e;
}
.slider::-webkit-slider-thumb {
  appearance: none;
  width: 20px;
  height: 17px;
  margin-top: -7px;
  border-radius: 9px;
  background: #e6e6e6;
}
.pct {
  width: 36px;
  margin-left: 10px;
}
</style>
